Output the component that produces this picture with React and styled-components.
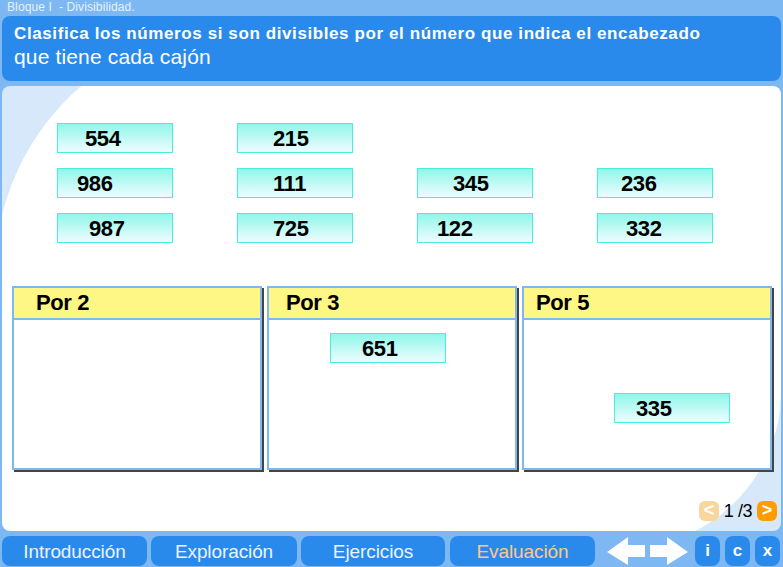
import React from 'react';
import styled, { createGlobalStyle } from 'styled-components';

const GlobalStyle = createGlobalStyle`
  html, body {
    margin: 0;
    padding: 0;
    background: #7db8f3;
  }
  * {
    box-sizing: border-box;
  }
`;

const Page = styled.div`
  width: 783px;
  height: 567px;
  display: flex;
  flex-direction: column;
  overflow: hidden;
  background: #7db8f3;
  font-family: 'Liberation Sans', Arial, sans-serif;
`;

const Breadcrumb = styled.div`
  height: 16px;
  padding-left: 7px;
  color: #e6f1fd;
  font-size: 12px;
  line-height: 14px;
  letter-spacing: 0.12px;
`;

const Header = styled.header`
  height: 65px;
  margin: 0 2px;
  padding: 8px 12px 0;
  background: #2a8aec;
  border-radius: 8px;
  color: #fff;
`;

const Title = styled.div`
  font-size: 17px;
  font-weight: bold;
  line-height: 20px;
  letter-spacing: 0.6px;
`;

const Subtitle = styled.div`
  font-size: 21px;
  line-height: 25px;
  letter-spacing: 0.15px;
`;

/* the two pale corners are arcs of big circles, cut off by the panel */
const Panel = styled.main`
  height: 445px;
  margin: 5px 2px;
  padding: 37px 10px 0;
  overflow: hidden;
  border-radius: 8px;
  background:
    radial-gradient(circle at 241px 188px, #fff 247.5px, #d7e8fb 248.5px) left top / 82px 132px no-repeat,
    radial-gradient(circle at 0 0, #fff 156.5px, #d7e8fb 157.5px) right bottom / 157px 140px no-repeat,
    #fff;
`;

const Tray = styled.div`
  display: grid;
  grid-template-columns: repeat(4, 116px);
  grid-auto-rows: 30px;
  column-gap: 64px;
  row-gap: 15px;
  margin-left: 45px;
`;

const Tile = styled.div`
  height: 30px;
  width: 116px;
  padding-left: ${(p) => p.$inset}px;
  border: 1px solid #45f0dc;
  background: linear-gradient(#8ff7e9, #effcff);
  color: #000;
  font-size: 22px;
  font-weight: bold;
  line-height: 29px;
  letter-spacing: -0.4px;
  ${(p) => p.$newRow && 'grid-column: 1;'}
`;

const PlacedTile = styled(Tile)`
  position: absolute;
  left: ${(p) => p.$x}px;
  top: ${(p) => p.$y}px;
`;

const Boxes = styled.div`
  display: flex;
  gap: 5px;
  margin-top: 43px;
`;

const Box = styled.section`
  position: relative;
  flex: 0 0 250px;
  height: 184px;
  border: 2px solid #7db8f3;
  background: #fff;
  box-shadow: 2px 2px 0 #444;
`;

const BoxTitle = styled.div`
  height: 32px;
  padding-left: ${(p) => p.$inset}px;
  border-bottom: 2px solid #7db8f3;
  background: #fff785;
  color: #000;
  font-size: 22px;
  font-weight: bold;
  line-height: 30px;
  letter-spacing: -0.4px;
`;

const Pager = styled.div`
  display: flex;
  justify-content: flex-end;
  align-items: center;
  height: 20px;
  margin-top: 31px;
  margin-right: -6px;
`;

const PageButton = styled.div`
  width: 20px;
  height: 20px;
  border-radius: 6px;
  background: ${(p) => (p.$disabled ? '#f9d69b' : '#ff9c00')};
  color: #fff;
  font-size: 18px;
  font-weight: bold;
  line-height: 19px;
  text-align: center;
`;

const PageCount = styled.div`
  width: 38px;
  color: #000;
  font-size: 18px;
  text-align: center;
  letter-spacing: -0.4px;
`;

const Nav = styled.nav`
  display: flex;
  align-items: center;
  height: 30px;
  padding-left: 2px;
`;

const Section = styled.button`
  flex: 0 0 ${(p) => p.$width}px;
  height: 30px;
  margin-right: ${(p) => p.$gap}px;
  padding: 0;
  border: 0;
  border-radius: 8px;
  background: #2a8aec;
  color: ${(p) => (p.$active ? '#fdc98a' : '#eaf4ff')};
  font-family: inherit;
  font-size: 19px;
  line-height: 29px;
  letter-spacing: -0.1px;
`;

const Arrows = styled.div`
  display: flex;
  flex: none;
  gap: 3px;
  margin-left: 8px;
  margin-right: 7px;
`;

const Tool = styled.button`
  flex: 0 0 25px;
  height: 30px;
  margin-right: 5px;
  padding: 0;
  border: 0;
  border-radius: 8px;
  background: #2a8aec;
  color: #fff;
  font-family: inherit;
  font-size: 17px;
  font-weight: bold;
`;

const ArrowIcon = ({ flip }) => (
  <svg width="39" height="30" viewBox="0 0 39 30" style={{ display: 'block', transform: flip ? 'scaleX(-1)' : undefined }}>
    <path d="M0 16 L21 1 V9 H38 V21 H21 V29 Z" fill="#fff" />
  </svg>
);

const trayTiles = [
  { value: 554, inset: 27 },
  { value: 215, inset: 35 },
  { value: 986, inset: 19, newRow: true },
  { value: 111, inset: 35 },
  { value: 345, inset: 35 },
  { value: 236, inset: 23 },
  { value: 987, inset: 31, newRow: true },
  { value: 725, inset: 35 },
  { value: 122, inset: 19 },
  { value: 332, inset: 28 },
];

const sections = [
  { label: 'Introducción', width: 145, gap: 4 },
  { label: 'Exploración', width: 146, gap: 4 },
  { label: 'Ejercicios', width: 144, gap: 5 },
  { label: 'Evaluación', width: 145, gap: 4, active: true },
];

export default function App() {
  return (
    <Page>
      <GlobalStyle />
      <Breadcrumb>Bloque I &nbsp;- Divisibilidad.</Breadcrumb>
      <Header>
        <Title>Clasifica los números si son divisibles por el número que indica el encabezado</Title>
        <Subtitle>que tiene cada cajón</Subtitle>
      </Header>
      <Panel>
        <Tray>
          {trayTiles.map((t) => (
            <Tile key={t.value} $inset={t.inset} $newRow={t.newRow}>
              {t.value}
            </Tile>
          ))}
        </Tray>
        <Boxes>
          <Box>
            <BoxTitle $inset={22}>Por 2</BoxTitle>
          </Box>
          <Box>
            <BoxTitle $inset={17}>Por 3</BoxTitle>
            <PlacedTile $inset={31} $x={61} $y={45}>651</PlacedTile>
          </Box>
          <Box>
            <BoxTitle $inset={12}>Por 5</BoxTitle>
            <PlacedTile $inset={21} $x={90} $y={105}>335</PlacedTile>
          </Box>
        </Boxes>
        <Pager>
          <PageButton $disabled>&lt;</PageButton>
          <PageCount>1 /3</PageCount>
          <PageButton>&gt;</PageButton>
        </Pager>
      </Panel>
      <Nav>
        {sections.map((s) => (
          <Section key={s.label} $width={s.width} $gap={s.gap} $active={s.active}>
            {s.label}
          </Section>
        ))}
        <Arrows>
          <ArrowIcon />
          <ArrowIcon flip />
        </Arrows>
        <Tool>i</Tool>
        <Tool>c</Tool>
        <Tool>x</Tool>
      </Nav>
    </Page>
  );
}
